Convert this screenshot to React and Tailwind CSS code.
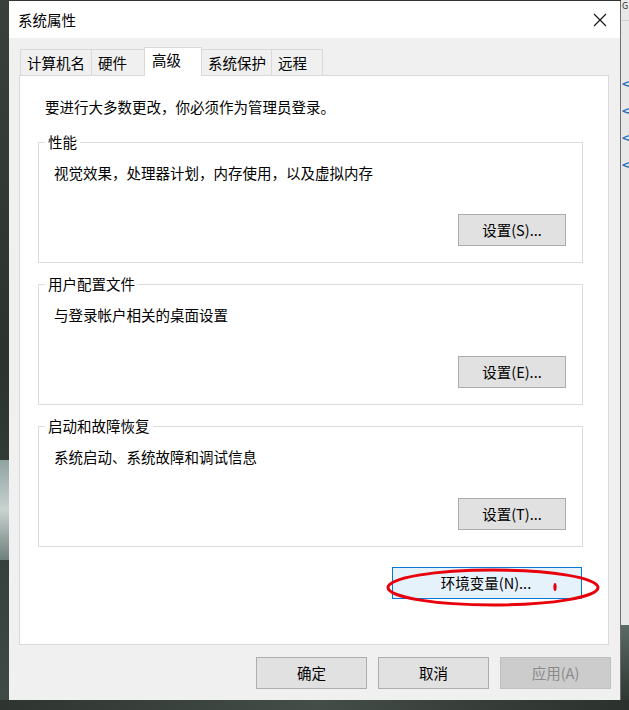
const font = { fontFamily: '"Noto Sans CJK SC", "Noto Sans", sans-serif' };

function WinButton({ children, disabled, className = "" }) {
  return (
    <div
      className={
        "w-[111px] h-[32px] flex items-center justify-center border text-[14.5px] " +
        (disabled
          ? "bg-[#cccccc] border-[#bfbfbf] text-[#8a8a8a] "
          : "bg-[#e1e1e1] border-[#adadad] text-black ") +
        className
      }
    >
      {children}
    </div>
  );
}

function Group({ title, desc, btn }) {
  return (
    <div className="relative h-[121px] border border-[#dcdcdc] flex flex-col justify-between pt-[20px] pl-[15px] pr-[16px] pb-[16px]">
      <span className="absolute -top-[11px] left-[6px] bg-white px-[3px] leading-[20px] text-[14.5px]">
        {title}
      </span>
      <div className="leading-[20px] text-[14.5px]">{desc}</div>
      <div className="self-end w-[108px] h-[32px] flex items-center justify-center bg-[#e1e1e1] border border-[#adadad] text-[14.5px]">
        {btn}
      </div>
    </div>
  );
}

export default function App() {
  const tabs = ["计算机名", "硬件", "高级", "系统保护", "远程"];
  const tabWidths = ["w-[72px]", "w-[54px]", "w-[58px]", "w-[71px]", "w-[52px]"];

  return (
    <div className="w-[629px] h-[710px] flex flex-col overflow-hidden bg-[#2f3531]" style={font}>
      <div className="flex h-[700px]">
        {/* left backdrop */}
        <div className="w-[9px] bg-gradient-to-b from-[#3a403b] via-[#2c332e] to-[#3d4a46] flex flex-col">
          <div className="h-[460px]" />
          <div className="h-[100px] bg-gradient-to-b from-[#8fa3a0] via-[#c9d3d1] to-[#6f807c]" />
        </div>

        {/* dialog window */}
        <div className="w-[612px] h-[700px] mt-[1px] flex flex-col bg-[#f0f0f0] border-r border-[#6e6e6e]">
          {/* title bar */}
          <div className="h-[37px] bg-white flex items-center justify-between pl-[9px] pr-[13px] shrink-0">
            <span className="text-[14.5px] text-black">系统属性</span>
            <svg width="14" height="14" viewBox="0 0 14 14">
              <path d="M1 1 L13 13 M13 1 L1 13" stroke="#111" strokeWidth="1.1" />
            </svg>
          </div>

          {/* tabs */}
          <div className="flex items-end h-[37px] pl-[11px] shrink-0">
            {tabs.map((t, i) =>
              i === 2 ? (
                <div
                  key={t}
                  className={tabWidths[i] + " h-[29px] -ml-px bg-white border border-b-0 border-[#d9d9d9] relative z-10 -mb-px pl-[7px] pt-[2px] text-[14.5px] leading-[20px]"}
                >
                  {t}
                </div>
              ) : (
                <div
                  key={t}
                  className={tabWidths[i] + " h-[26px] -ml-px first:ml-0 bg-[#f0f0f0] border border-b-0 border-[#d9d9d9] pl-[6px] pt-[3px] text-[14.5px] leading-[20px]"}
                >
                  {t}
                </div>
              )
            )}
          </div>

          {/* tab panel */}
          <div className="ml-[10px] w-[590px] h-[570px] bg-white border border-[#d9d9d9] flex flex-col pt-[21px] pl-[18px] pr-[25px] shrink-0">
            <div className="pl-[7px] leading-[20px] text-[14.5px] mb-[25px]">
              要进行大多数更改，你必须作为管理员登录。
            </div>
            <div className="flex flex-col gap-[21px]">
              <Group title="性能" desc="视觉效果，处理器计划，内存使用，以及虚拟内存" btn="设置(S)..." />
              <Group title="用户配置文件" desc="与登录帐户相关的桌面设置" btn="设置(E)..." />
              <Group title="启动和故障恢复" desc="系统启动、系统故障和调试信息" btn="设置(T)..." />
            </div>
            <div className="self-end mr-[1px] mt-[20px] relative">
              <div className="w-[190px] h-[32px] flex items-center justify-center bg-[#e5f1fb] border border-[#0078d7] text-[14.5px] pr-[2px]">
                环境变量(N)...
              </div>
              <svg className="absolute -left-[6px] top-[1px]" width="216" height="40" viewBox="0 0 216 40">
                <ellipse cx="107" cy="19.5" rx="105" ry="17.5" fill="none" stroke="#e8000b" strokeWidth="3" />
                <ellipse cx="169" cy="19" rx="1.6" ry="4" fill="#e8000b" />
              </svg>
            </div>
          </div>

          {/* bottom buttons */}
          <div className="flex justify-end gap-[11px] pr-[9px] pt-[12px]">
            <WinButton>确定</WinButton>
            <WinButton>取消</WinButton>
            <WinButton disabled>应用(A)</WinButton>
          </div>
        </div>

        {/* right backdrop */}
        <div className="flex-1 flex flex-col overflow-hidden">
          <div className="h-[625px] bg-[#e8e8e8] flex flex-col pl-[1px]">
            <div className="h-[21px] border-b border-[#cfcfcf] text-[#333] text-[9px] leading-[12px]">G</div>
            <div className="h-[56px] shrink-0" />
            {[0, 1, 2, 3].map((i) => (
              <div key={i} className="h-[27px] shrink-0 text-[12px] leading-[14px] whitespace-nowrap tracking-[-1px]">
                <span className="text-[#1f6fc5] font-bold">&lt;</span>
                <span className="text-[#222]">-</span>
              </div>
            ))}
          </div>
          <div className="flex-1 bg-gradient-to-b from-[#5b6b66] to-[#2f3833]" />
        </div>
      </div>
      <div className="h-[10px] bg-gradient-to-r from-[#2e3530] via-[#454d48] to-[#2b312d]" />
    </div>
  );
}
